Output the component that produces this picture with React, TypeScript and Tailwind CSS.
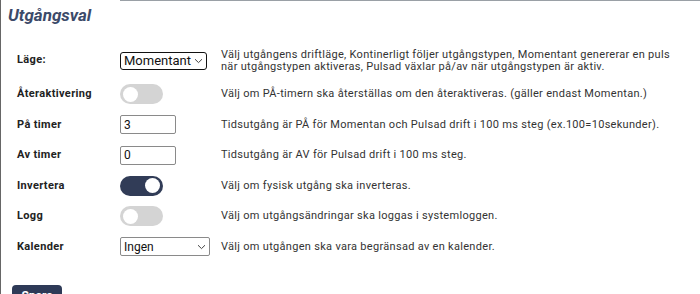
import React from "react"

const font = { fontFamily: "Roboto, 'Noto Sans', sans-serif" }

function Toggle({ on }: { on: boolean }) {
  return (
    <div
      className={
        "flex h-[20px] w-[43px] items-center rounded-full px-[3px] " +
        (on ? "justify-end bg-[#313c57]" : "justify-start bg-[#d4d4d4]")
      }
    >
      <div className="h-[15px] w-[15px] rounded-full bg-white" />
    </div>
  )
}

function Chevron() {
  return (
    <svg width="9" height="6" viewBox="0 0 9 6" className="ml-auto">
      <path d="M1 1.2 L4.5 4.6 L8 1.2" fill="none" stroke="#444" strokeWidth="1" />
    </svg>
  )
}

function Row({
  label,
  control,
  desc,
  tall,
}: {
  label: string
  control: React.ReactNode
  desc: React.ReactNode
  tall?: boolean
}) {
  return (
    <div className={"flex shrink-0 items-center " + (tall ? "h-[37px]" : "h-[30.5px]")}>
      <div className="w-[119px] shrink-0 pl-[16px] text-[11px] font-bold tracking-[0.35px] text-[#222]">
        {label}
      </div>
      <div className="w-[101px] shrink-0">{control}</div>
      <div className="text-[11px] leading-[12px] tracking-[0.3px] text-[#333]">{desc}</div>
    </div>
  )
}

export default function App() {
  return (
    <main className="h-[294px] w-[700px] overflow-hidden bg-white" style={font}>
      <div className="flex h-full flex-col border-l border-[#666]">
        <div className="flex h-[42px] shrink-0">
          <div className="w-[119px] pl-[7px] pt-[3px]">
            <h1 className="text-[17px] font-bold italic text-[#3c4a69]">Utgångsval</h1>
          </div>
          <div className="flex-1 border-t border-[#9aa0a6]" />
        </div>

        <Row
          tall
          label="Läge:"
          control={
            <div className="flex h-[18px] w-[87px] items-center rounded-[3px] border border-[#111] px-[3px] text-[13px] text-[#111]">
              Momentant
              <Chevron />
            </div>
          }
          desc={
            <>
              Välj utgångens driftläge, Kontinerligt följer utgångstypen, Momentant genererar en puls
              <br />
              när utgångstypen aktiveras, Pulsad växlar på/av när utgångstypen är aktiv.
            </>
          }
        />
        <Row
          label="Återaktivering"
          control={<Toggle on={false} />}
          desc="Välj om PÅ-timern ska återställas om den återaktiveras. (gäller endast Momentan.)"
        />
        <Row
          label="På timer"
          control={
            <div className="flex h-[19px] w-[56px] items-center rounded-[2px] border border-[#8a8a8a] px-[3px] text-[12px] text-[#111]">
              3
            </div>
          }
          desc="Tidsutgång är PÅ för Momentan och Pulsad drift i 100 ms steg (ex.100=10sekunder)."
        />
        <Row
          label="Av timer"
          control={
            <div className="flex h-[19px] w-[56px] items-center rounded-[2px] border border-[#8a8a8a] px-[3px] text-[12px] text-[#111]">
              0
            </div>
          }
          desc="Tidsutgång är AV för Pulsad drift i 100 ms steg."
        />
        <Row label="Invertera" control={<Toggle on />} desc="Välj om fysisk utgång ska inverteras." />
        <Row
          label="Logg"
          control={<Toggle on={false} />}
          desc="Välj om utgångsändringar ska loggas i systemloggen."
        />
        <Row
          label="Kalender"
          control={
            <div className="flex h-[19px] w-[90px] items-center rounded-[2px] border border-[#8a8a8a] px-[3px] text-[12px] text-[#111]">
              Ingen
              <Chevron />
            </div>
          }
          desc="Välj om utgången ska vara begränsad av en kalender."
        />

        <div className="shrink-0 pl-[11px] pt-[21px]">
          <button className="h-[22px] w-[50px] rounded-[4px] bg-[#2e3a57] text-[12px] font-bold text-white">
            Spara
          </button>
        </div>
      </div>
    </main>
  )
}
